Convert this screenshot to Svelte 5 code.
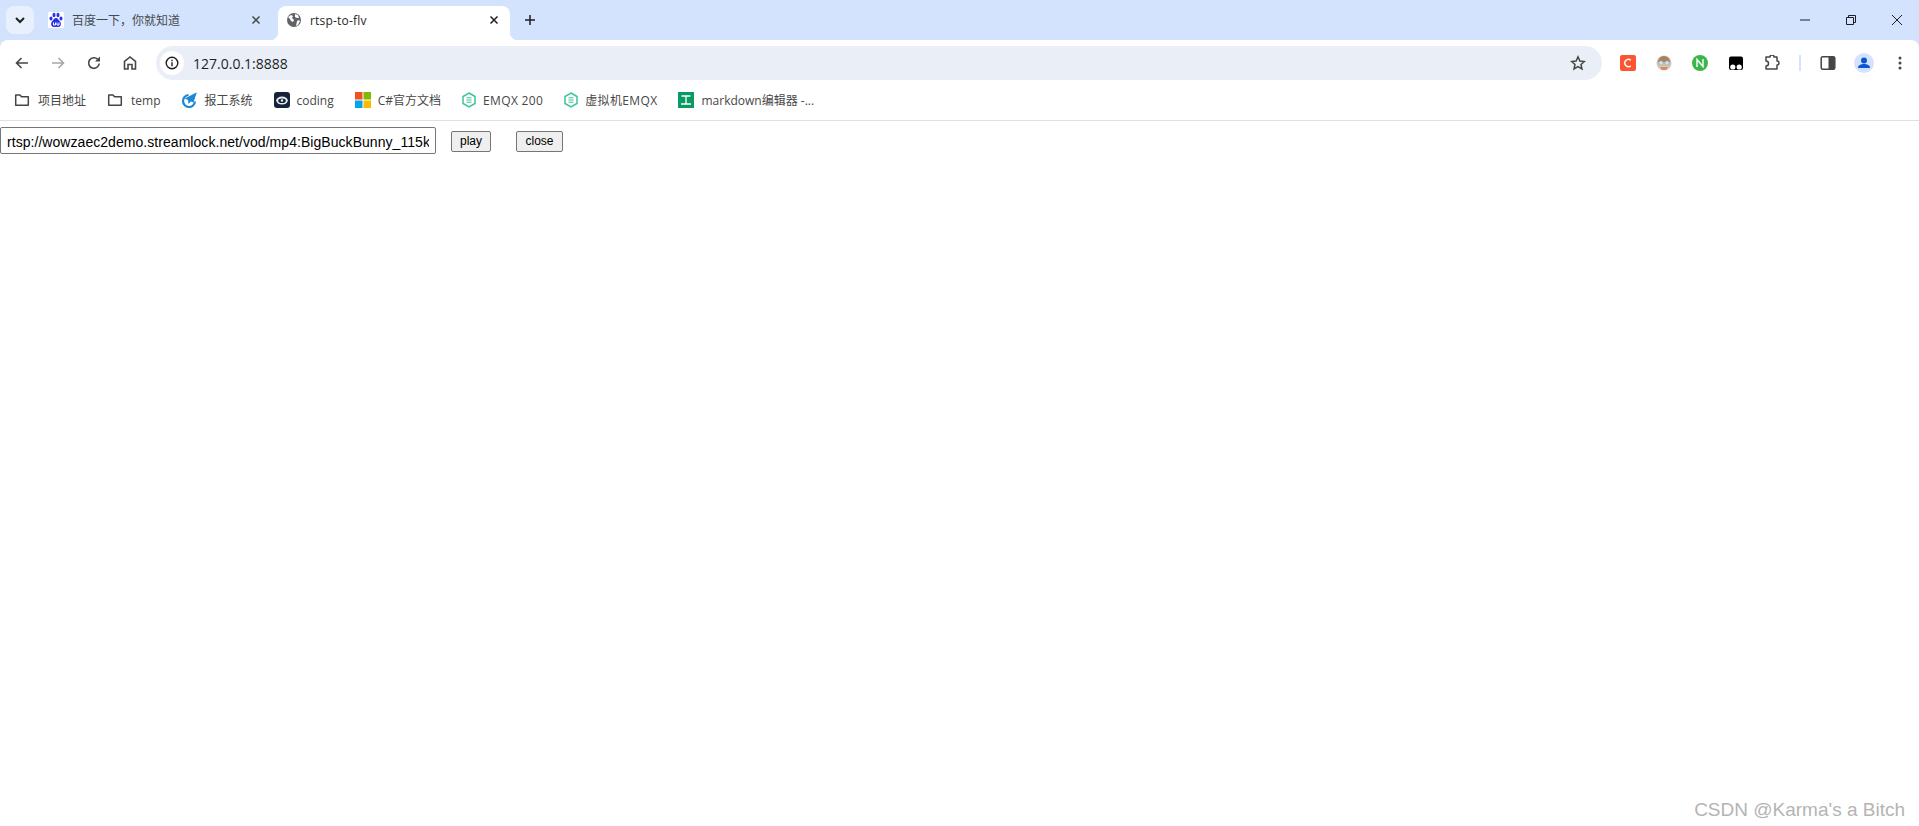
<script lang="ts">
	const bookmarks = [
		{ label: '项目地址', icon: 'folder' },
		{ label: 'temp', icon: 'folder' },
		{ label: '报工系统', icon: 'plane' },
		{ label: 'coding', icon: 'coding' },
		{ label: 'C#官方文档', icon: 'ms' },
		{ label: 'EMQX 200', icon: 'emqx' },
		{ label: '虚拟机EMQX', icon: 'emqx' },
		{ label: 'markdown编辑器 -...', icon: 'md' }
	];

	let url = $state('rtsp://wowzaec2demo.streamlock.net/vod/mp4:BigBuckBunny_115k');
</script>

<div class="browser">
	<div class="tabstrip">
		<button type="button" class="tab-search" aria-label="Search tabs">
			<svg width="16" height="16" viewBox="0 0 16 16"><path d="M4 6l4 4 4-4" fill="none" stroke="#1f1f1f" stroke-width="2" /></svg>
		</button>

		<div class="tab">
			<svg class="favicon" width="16" height="16" viewBox="0 0 16 16">
				<rect width="16" height="16" fill="#fff" />
				<ellipse cx="3" cy="6.500" rx="1.500" ry="2" fill="#2932e1" />
				<ellipse cx="6" cy="3" rx="1.500" ry="2.200" fill="#2932e1" />
				<ellipse cx="10" cy="3" rx="1.500" ry="2.200" fill="#2932e1" />
				<ellipse cx="13" cy="6.500" rx="1.500" ry="2" fill="#2932e1" />
				<path d="M8 6c-2 0-2.500 2-4 3.500C2.500 11 3 15 5.500 15h5c2.500 0 3-4 1.500-5.500C10.500 8 10 6 8 6z" fill="#2932e1" />
				<path d="M5.500 10.500v2.500h2v-2.500M9 10.500v2.500h2v-2.500" fill="none" stroke="#fff" />
			</svg>
			<span class="tab-title muted">百度一下，你就知道</span>
			<svg class="tab-close" width="16" height="16" viewBox="0 0 16 16"><path d="M4.500 4.500l7 7M11.500 4.500l-7 7" stroke="#444746" stroke-width="1.500" /></svg>
		</div>

		<div class="tab active">
			<svg class="favicon" width="16" height="16" viewBox="0 0 16 16">
				<circle cx="8" cy="8" r="7" fill="#5f6368" />
				<path d="M2 5l3-2 2 1-1 2 2 2-1 2-2-1-1-2zM9 2l3 1 1 3-2 0-2-1zM11 9l2-1 1 1-2 4-2 1z" fill="#fff" />
			</svg>
			<span class="tab-title">rtsp-to-flv</span>
			<svg class="tab-close" width="16" height="16" viewBox="0 0 16 16"><path d="M4.500 4.500l7 7M11.500 4.500l-7 7" stroke="#1f1f1f" stroke-width="1.500" /></svg>
		</div>

		<svg class="new-tab" width="16" height="16" viewBox="0 0 16 16"><path d="M8 3v10M3 8h10" stroke="#1f1f1f" stroke-width="1.500" /></svg>

		<div class="window-controls">
			<svg width="12" height="12" viewBox="0 0 12 12"><path d="M1 6h10" stroke="#1f1f1f" /></svg>
			<svg width="12" height="12" viewBox="0 0 12 12"><path d="M1.500 3.500h7v7h-7zM3.500 3.500v-2h7v7h-2" fill="none" stroke="#1f1f1f" /></svg>
			<svg width="12" height="12" viewBox="0 0 12 12"><path d="M1 1l10 10M11 1L1 11" stroke="#1f1f1f" /></svg>
		</div>
	</div>

	<div class="toolbar">
		<div class="nav-buttons">
			<svg width="16" height="16" viewBox="0 0 16 16"><path d="M14 8H3M7.500 3L2.500 8l5 5" fill="none" stroke="#444746" stroke-width="1.600" /></svg>
			<svg width="16" height="16" viewBox="0 0 16 16"><path d="M2 8h11M8.500 3l5 5-5 5" fill="none" stroke="#a5a7a8" stroke-width="1.600" /></svg>
			<svg width="16" height="16" viewBox="0 0 16 16"><path d="M13.200 8.500A5.300 5.300 0 1 1 11.600 4.200" fill="none" stroke="#444746" stroke-width="1.600" /><path d="M14 1.500v5H9z" fill="#444746" /></svg>
			<svg width="16" height="16" viewBox="0 0 16 16"><path d="M2.500 14V6.500L8 2l5.500 4.500V14H10V9.500H6V14z" fill="none" stroke="#444746" stroke-width="1.600" /></svg>
		</div>

		<div class="omnibox">
			<span class="site-info">
				<svg width="14" height="14" viewBox="0 0 14 14"><circle cx="7" cy="7" r="5.800" fill="none" stroke="#1f1f1f" stroke-width="1.400" /><path d="M7 6.200v4M7 3.800v1.400" stroke="#1f1f1f" stroke-width="1.400" /></svg>
			</span>
			<span class="address">127.0.0.1:8888</span>
			<svg class="star" width="16" height="16" viewBox="0 0 16 16"><path d="M8 1.800l1.900 4.200 4.500.5-3.400 3 1 4.500L8 11.700 4 14l1-4.500-3.400-3 4.500-.5z" fill="none" stroke="#444746" stroke-width="1.500" /></svg>
		</div>

		<div class="extensions">
			<svg width="16" height="16" viewBox="0 0 16 16"><rect width="16" height="16" rx="2" fill="#fc5531" /><path d="M10.800 5.300A3.600 3.600 0 1 0 10.800 10.700" fill="none" stroke="#fff" stroke-width="1.500" /></svg>
			<svg width="16" height="16" viewBox="0 0 16 16">
				<circle cx="8" cy="8" r="7.500" fill="#d9c5ae" />
				<path d="M2 7a6 6 0 0 1 12 0z" fill="#a8815c" />
				<circle cx="5" cy="8" r="2.200" fill="#cfe6ee" stroke="#7fa8b5" stroke-width=".7" />
				<circle cx="11" cy="8" r="2.200" fill="#cfe6ee" stroke="#7fa8b5" stroke-width=".7" />
				<path d="M4 12h8l-2 3H6z" fill="#d98a66" />
			</svg>
			<svg width="16" height="16" viewBox="0 0 16 16"><circle cx="8" cy="8" r="8" fill="#3cb54a" /><path d="M5 12V4.500l6 7V4" fill="none" stroke="#fff" stroke-width="1.400" /></svg>
			<svg width="16" height="16" viewBox="0 0 16 16"><rect x="1" y="1.500" width="14" height="13.500" rx="2" fill="#000" /><circle cx="4.800" cy="12" r="2.600" fill="#fff" /><circle cx="11.200" cy="12" r="2.600" fill="#fff" /></svg>
			<svg width="16" height="16" viewBox="0 0 16 16"><path d="M2 2h4a2 2 0 0 1 4 0h3v4a2 2 0 0 1 0 4v4H2v-3a2.500 2.500 0 0 0 0-5z" fill="none" stroke="#444746" stroke-width="1.500" stroke-linejoin="round" /></svg>
			<span class="divider"></span>
			<svg width="16" height="16" viewBox="0 0 16 16"><rect x="1.200" y="1.700" width="13.600" height="12.600" rx="1.500" fill="none" stroke="#444746" stroke-width="1.500" /><rect x="8.500" y="2" width="6" height="12" fill="#444746" /></svg>
			<span class="avatar">
				<svg width="20" height="20" viewBox="0 0 20 20"><circle cx="10" cy="10" r="10" fill="#d3e3fd" /><circle cx="10" cy="7.500" r="3" fill="#0b57d0" /><path d="M4 15c0-3 3-4 6-4s6 1 6 4z" fill="#0b57d0" /></svg>
			</span>
			<svg width="16" height="16" viewBox="0 0 16 16"><circle cx="8" cy="3" r="1.500" fill="#444746" /><circle cx="8" cy="8" r="1.500" fill="#444746" /><circle cx="8" cy="13" r="1.500" fill="#444746" /></svg>
		</div>
	</div>

	<div class="bookmarks">
		{#each bookmarks as item}
			<div class="bookmark" class:folder={item.icon === 'folder'} class:emqx={item.icon === 'emqx'}>
				{#if item.icon === 'folder'}
					<svg width="16" height="16" viewBox="0 0 16 16"><path d="M1.700 3h4.300l1.500 1.700h6.800v8.600H1.700z" fill="none" stroke="#444746" stroke-width="1.500" stroke-linejoin="round" /></svg>
				{:else if item.icon === 'plane'}
					<svg width="16" height="16" viewBox="0 0 16 16"><path d="M7.500 3A6 6 0 1 0 14 9.500" fill="none" stroke="#1a87d8" stroke-width="2.200" /><path d="M15.800.2L3.800 6.500 7 8l.5 4 2.300-2.600 2.700 1z" fill="#1a87d8" /></svg>
				{:else if item.icon === 'coding'}
					<svg width="16" height="16" viewBox="0 0 16 16"><rect width="16" height="16" rx="3" fill="#14233a" /><ellipse cx="8" cy="8.500" rx="5.800" ry="4" fill="#e8ecf1" /><ellipse cx="8" cy="8.800" rx="3.800" ry="2.300" fill="#14233a" /><circle cx="8" cy="8.500" r="1.200" fill="#e8ecf1" /></svg>
				{:else if item.icon === 'ms'}
					<svg width="16" height="16" viewBox="0 0 16 16"><rect width="7.500" height="7.500" fill="#f25022" /><rect x="8.500" width="7.500" height="7.500" fill="#7fba00" /><rect y="8.500" width="7.500" height="7.500" fill="#00a4ef" /><rect x="8.500" y="8.500" width="7.500" height="7.500" fill="#ffb900" /></svg>
				{:else if item.icon === 'emqx'}
					<svg width="14" height="16" viewBox="0 0 14 16"><path d="M7 1l6 3.500v7L7 15l-6-3.500v-7z" fill="none" stroke="#3dc496" stroke-width="1.500" /><path d="M4.500 5.800h5M4.500 8h5M4.500 10.200h5" stroke="#3dc496" /></svg>
				{:else}
					<svg width="16" height="16" viewBox="0 0 16 16"><rect width="16" height="16" fill="#0a9a63" /><path d="M3.500 4h9M8 4v8M3 12h10" stroke="#fff" stroke-width="1.300" /></svg>
				{/if}
				<span>{item.label}</span>
			</div>
		{/each}
	</div>
</div>

<main class="page">
	<input type="text" bind:value={url} />
	<button type="button" class="play">play</button>
	<button type="button" class="close">close</button>
</main>

<div class="watermark">CSDN @Karma's a Bitch</div>

<style>
	:global(body) {
		background: #fff;
		height: 826px;
		overflow: hidden;
	}

	.browser {
		background: #d3e3fd;
		font-family: 'Open Sans', 'Noto Sans CJK SC', sans-serif;
		font-size: 12px;
	}

	.tabstrip {
		align-items: flex-end;
		display: flex;
		height: 40px;
		padding-left: 6px;
	}

	.tab-search {
		align-items: center;
		align-self: flex-start;
		background: #e9f0fd;
		border: none;
		border-radius: 8px;
		display: flex;
		height: 28px;
		justify-content: center;
		margin-top: 6px;
		padding: 0;
		width: 28px;
	}

	.tab {
		align-items: center;
		border-radius: 8px 8px 0 0;
		box-sizing: border-box;
		color: #1f1f1f;
		display: flex;
		height: 34px;
		margin-left: 6px;
		padding: 0 8px 6px;
		width: 232px;
	}

	.tab.active {
		background: #fff;
		position: relative;
	}

	/* concave corners where the active tab meets the toolbar */
	.tab.active::before,
	.tab.active::after {
		bottom: 0;
		content: '';
		height: 8px;
		position: absolute;
		width: 8px;
	}

	.tab.active::before {
		background: radial-gradient(circle at 0 0, transparent 8px, #fff 8.500px);
		left: -8px;
	}

	.tab.active::after {
		background: radial-gradient(circle at 100% 0, transparent 8px, #fff 8.500px);
		right: -8px;
	}

	.favicon {
		flex: none;
		margin-right: 8px;
	}

	.tab-title {
		flex: 1;
		letter-spacing: 0.2px;
		white-space: nowrap;
	}

	.muted {
		color: #474a4d;
		letter-spacing: 0;
	}

	.new-tab {
		align-self: center;
		margin-left: 12px;
	}

	.window-controls {
		align-items: center;
		align-self: center;
		display: flex;
		gap: 34px;
		margin-left: auto;
		padding-right: 16px;
	}

	.toolbar {
		align-items: center;
		background: #fff;
		border-radius: 8px 8px 0 0;
		box-sizing: border-box;
		display: flex;
		height: 40px;
		padding-top: 6px;
	}

	.nav-buttons {
		display: flex;
		gap: 20px;
		margin-left: 14px;
	}

	.omnibox {
		align-items: center;
		background: #eaeef7;
		border-radius: 17px;
		box-sizing: border-box;
		display: flex;
		flex: none;
		height: 34px;
		margin-left: 18px;
		padding: 0 16px 0 4px;
		width: 1446px;
	}

	.site-info {
		align-items: center;
		background: #fff;
		border-radius: 50%;
		display: flex;
		height: 24px;
		justify-content: center;
		width: 24px;
	}

	.address {
		color: #1f1f1f;
		flex: 1;
		font-size: 14px;
		margin-left: 9px;
	}

	.extensions {
		align-items: center;
		display: flex;
		gap: 20px;
		margin-left: 18px;
	}

	.divider {
		background: #d3e3fd;
		height: 16px;
		margin: 0 -1px;
		width: 2px;
	}

	.avatar {
		display: flex;
		margin: 0 -2px;
	}

	.bookmarks {
		align-items: center;
		background: #fff;
		border-bottom: 1px solid #e0e0e0;
		display: flex;
		gap: 21px;
		height: 40px;
		padding-left: 14px;
	}

	.bookmark {
		align-items: center;
		color: #474747;
		display: flex;
		gap: 7px;
		white-space: nowrap;
	}

	.bookmark.folder {
		gap: 8px;
	}

	.bookmark.emqx span {
		letter-spacing: 0.35px;
	}

	.page {
		align-items: center;
		display: flex;
		font-family: 'Liberation Sans', Arial, sans-serif;
		padding-top: 6px;
	}

	input {
		border: 1px solid #767676;
		border-radius: 2px;
		box-sizing: border-box;
		color: #000;
		font: 14px 'Liberation Sans', Arial, sans-serif;
		height: 27px;
		letter-spacing: 0.05px;
		padding: 2px 6px 0;
		width: 436px;
	}

	.play,
	.close {
		background: #efefef;
		border: 1px solid #767676;
		border-radius: 2px;
		color: #000;
		font: 12px 'Liberation Sans', Arial, sans-serif;
		height: 21px;
		margin-top: 1px;
		padding: 0 6px;
	}

	.play {
		margin-left: 15px;
		width: 40px;
	}

	.close {
		margin-left: 25px;
		width: 47px;
	}

	.watermark {
		bottom: 5px;
		color: #b4b4b4;
		font: 19px 'Liberation Sans', Arial, sans-serif;
		position: absolute;
		right: 14px;
	}
</style>
